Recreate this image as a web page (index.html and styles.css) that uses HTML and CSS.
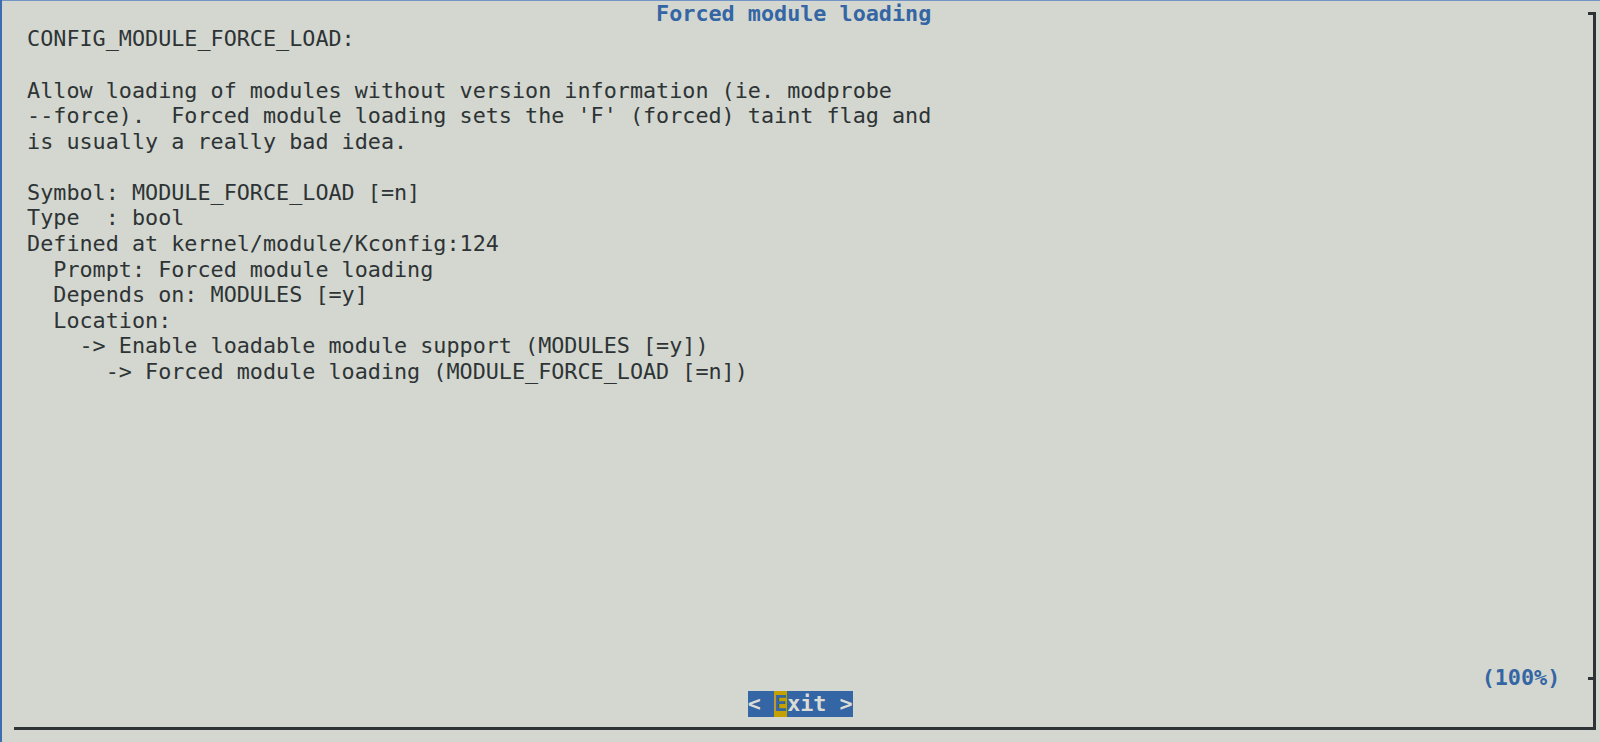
FILE: index.html
```html
<!DOCTYPE html>
<html lang="en">
<head>
<meta charset="utf-8">
<title>Forced module loading</title>
<link rel="stylesheet" href="styles.css">
</head>
<body>
<div class="term">
  <div class="dialog">
    <div class="row title"><span class="title-text">Forced module loading</span></div>
    <div class="help">
      <div class="row"> CONFIG_MODULE_FORCE_LOAD:</div>
      <div class="row"></div>
      <div class="row"> Allow loading of modules without version information (ie. modprobe</div>
      <div class="row"> --force).  Forced module loading sets the 'F' (forced) taint flag and</div>
      <div class="row"> is usually a really bad idea.</div>
      <div class="row"></div>
      <div class="row"> Symbol: MODULE_FORCE_LOAD [=n]</div>
      <div class="row"> Type  : bool</div>
      <div class="row"> Defined at kernel/module/Kconfig:124</div>
      <div class="row">   Prompt: Forced module loading</div>
      <div class="row">   Depends on: MODULES [=y]</div>
      <div class="row">   Location:</div>
      <div class="row">     -&gt; Enable loadable module support (MODULES [=y])</div>
      <div class="row">       -&gt; Forced module loading (MODULE_FORCE_LOAD [=n])</div>
    </div>
    <div class="spacer"></div>
    <div class="row status"><span class="percent">(100%)</span></div>
    <div class="row buttons"><span class="button">&lt; <span class="hotkey">E</span>xit &gt;</span></div>
  </div>
</div>
</body>
</html>
```
FILE: styles.css
```css
html, body {
  margin: 0;
  padding: 0;
  background: #d3d7cf;
}

.term {
  height: 742px;
  overflow: hidden;
  background: #d3d7cf;
  box-shadow: inset 2px 0 0 #3d6db0, inset 0 1px 0 #7596c4;
  font-family: "DejaVu Sans Mono", monospace;
  font-size: 21.77px;
  line-height: 25.59px;
  color: #2e3436;
}

.dialog {
  position: relative;
  margin-left: 14px;
  width: 1581.5px;
  height: 730.3px;
  box-sizing: border-box;
  padding-top: 0.8px;
  padding-bottom: 13.8px;
  display: flex;
  flex-direction: column;
}

.dialog::after {
  content: "";
  position: absolute;
  top: 11.7px;
  left: 0;
  right: 0;
  bottom: 0;
  border-right: 3px solid #2e3436;
  border-bottom: 3px solid #2e3436;
  pointer-events: none;
}

.dialog::before {
  content: "";
  position: absolute;
  top: 11.7px;
  right: 0;
  width: 8px;
  height: 3px;
  background: #2e3436;
}

.row {
  height: 25.59px;
  white-space: pre;
  padding-left: 0;
}

.title {
  padding-left: 49ch;
}

.title-text {
  font-weight: bold;
  color: #3465a4;
}

.spacer {
  flex: 1;
}

.status {
  position: relative;
  padding-left: 112ch;
}

.status::after {
  content: "";
  position: absolute;
  right: 0;
  top: 11.3px;
  width: 8px;
  height: 3px;
  background: #2e3436;
}

.percent {
  font-weight: bold;
  color: #3465a4;
}

.buttons {
  padding-left: 56ch;
}

.button {
  display: inline-block;
  height: 25.59px;
  background: #3465a4;
  color: #dcdcd6;
  font-weight: bold;
}

.hotkey {
  display: inline-block;
  height: 25.59px;
  background: #c4a000;
  color: #3465a4;
}
```
